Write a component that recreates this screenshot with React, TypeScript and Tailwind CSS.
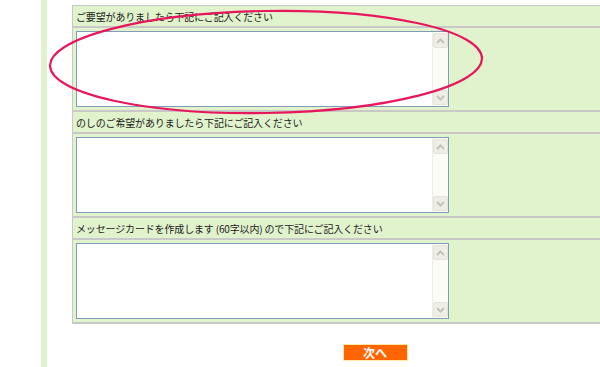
import React from "react";

const font = { fontFamily: '"MS PGothic", "Noto Sans CJK JP", "Noto Sans", sans-serif' };

function Chevron({ up }: { up: boolean }) {
  return (
    <svg width="9" height="6" viewBox="0 0 9 6" className="block">
      <path
        d={up ? "M1 5 L4.5 1.5 L8 5" : "M1 1 L4.5 4.5 L8 1"}
        fill="none"
        stroke="#c5c3b6"
        strokeWidth="2"
      />
    </svg>
  );
}

function ScrollBtn({ up }: { up: boolean }) {
  return (
    <div className="w-[15px] h-[15px] rounded-[2px] border border-[#e6e4d8] bg-[#efeee6] flex items-center justify-center">
      <Chevron up={up} />
    </div>
  );
}

function FakeTextarea() {
  return (
    <div className="flex w-[373px] h-[76px] border border-[#7f9db9] bg-white">
      <textarea className="flex-1 resize-none outline-none border-0 bg-white p-0" />
      <div className="w-[16px] h-full bg-[#fcfcf7] border-l border-[#efeee4] flex flex-col justify-between py-[1px]">
        <ScrollBtn up={true} />
        <ScrollBtn up={false} />
      </div>
    </div>
  );
}

function Section({ label }: { label: React.ReactNode }) {
  return (
    <div>
      <div
        className="h-[22px] flex items-center pl-[3px] text-[10px] text-[#222] tracking-[-0.15px] border-b-2 border-[#c8c8c8]"
        style={font}
      >
        {label}
      </div>
      <div className="p-[3px] border-b-2 border-[#c8c8c8]">
        <FakeTextarea />
      </div>
    </div>
  );
}

export default function App() {
  return (
    <div className="relative w-[600px] h-[367px] overflow-hidden bg-white flex">
      <div className="w-[41px] shrink-0" />
      <div className="w-[6px] shrink-0 bg-[#e0f3cc]" />
      <div className="w-[25px] shrink-0" />
      <div className="w-[606px] shrink-0 pt-[5px] flex flex-col">
        <div className="bg-[#e0f3cc] border-t border-l border-[#c8c8c8]">
          <Section label="ご要望がありましたら下記にご記入ください" />
          <Section label="のしのご希望がありましたら下記にご記入ください" />
          <Section
            label={
              <span>
                メッセージカードを作成します<span className="mx-[2px]">(60字以内)</span>ので下記にご記入ください
              </span>
            }
          />
        </div>
        <div className="flex justify-center mt-[20px]">
          <button
            className="w-[65px] h-[17px] bg-[#ff6600] border border-[#ffe9a8] text-white text-[12px] font-bold leading-none flex items-center justify-center"
            style={font}
          >
            次へ
          </button>
        </div>
      </div>
      <svg
        className="absolute left-0 top-0 pointer-events-none"
        width="600"
        height="367"
        viewBox="0 0 600 367"
      >
        <ellipse
          cx="266"
          cy="62"
          rx="216"
          ry="51"
          fill="none"
          stroke="#e8175d"
          strokeWidth="2.2"
          transform="rotate(-1 266 62)"
        />
      </svg>
    </div>
  );
}
